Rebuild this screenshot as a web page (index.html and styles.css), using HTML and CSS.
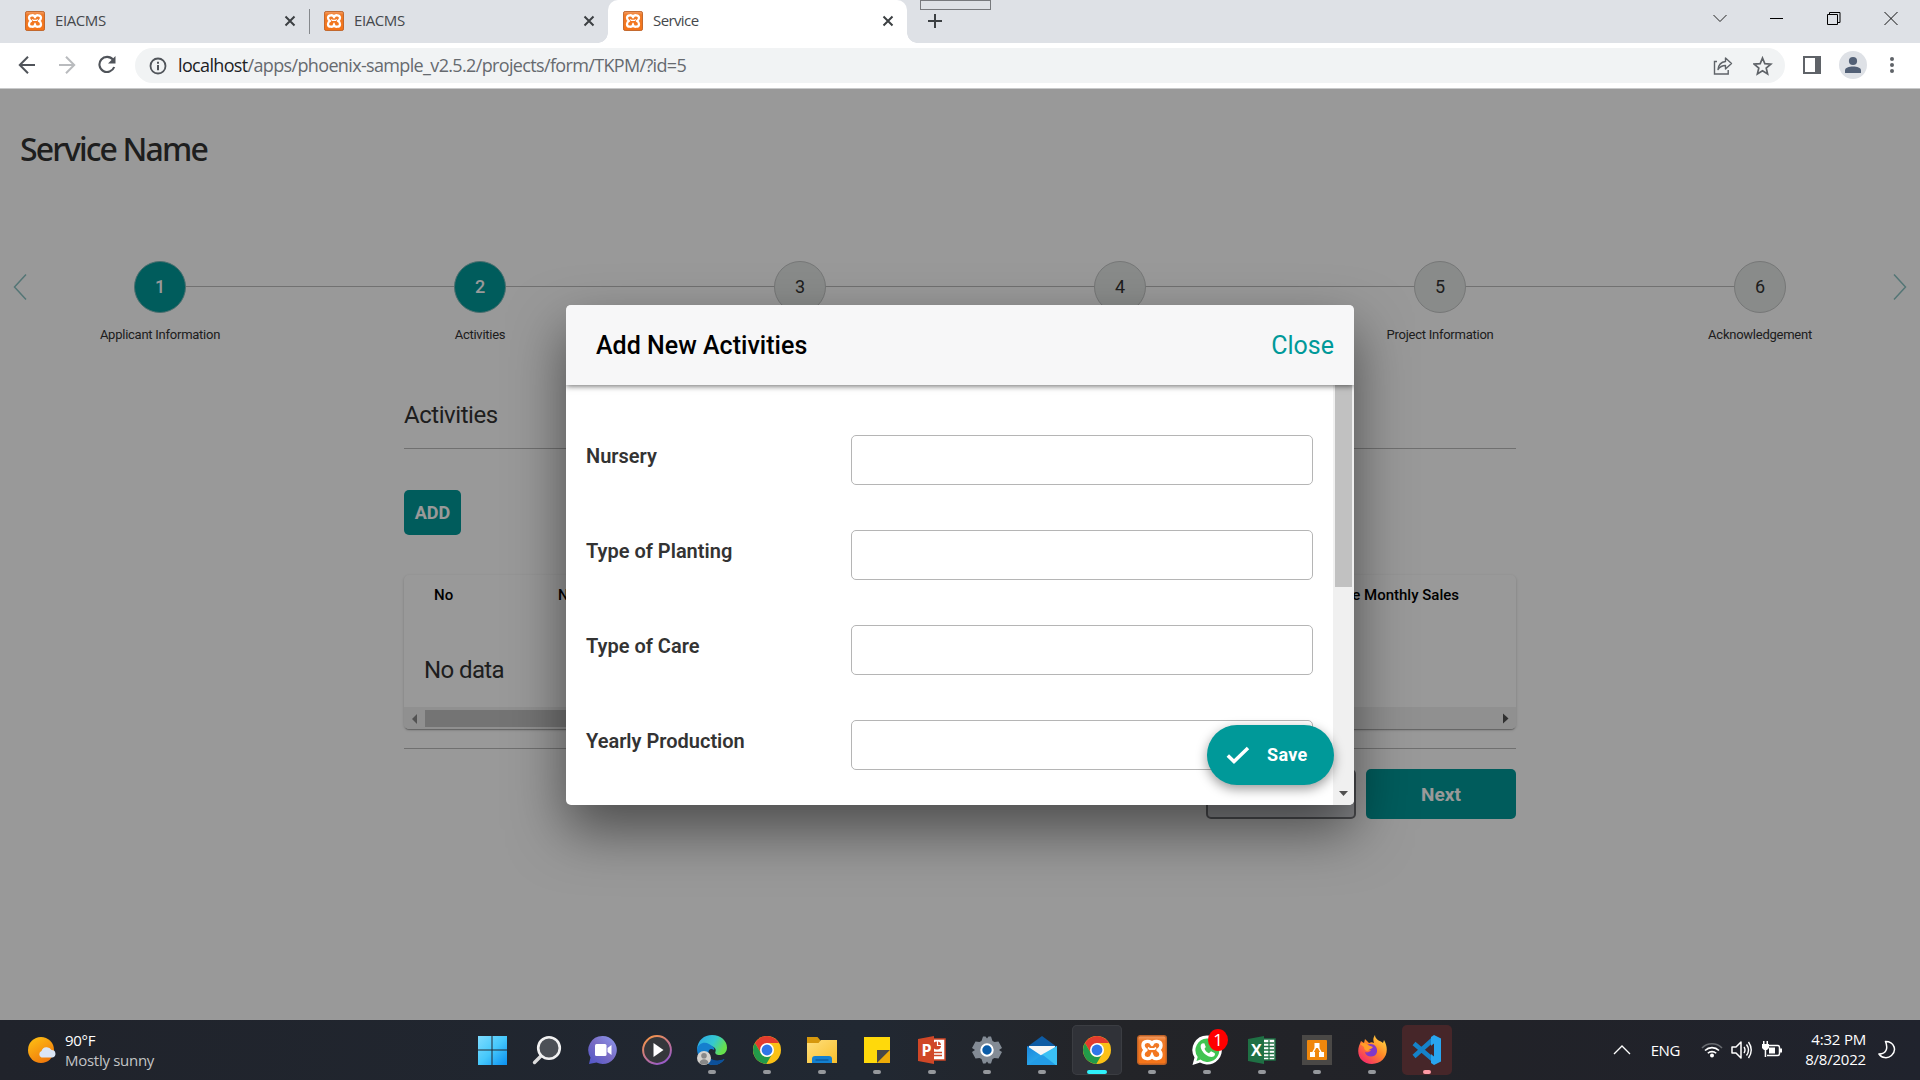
FILE: index.html
```html
<!DOCTYPE html>
<html lang="en">
<head>
<meta charset="utf-8">
<title>Service</title>
<link rel="stylesheet" href="styles.css">
</head>
<body>
<svg class="defs" width="0" height="0" aria-hidden="true">
  <defs>
    <linearGradient id="gWin" x1="0" y1="0" x2="1" y2="1"><stop offset="0" stop-color="#7fdcff"/><stop offset=".5" stop-color="#46c8fb"/><stop offset="1" stop-color="#0a8ff0"/></linearGradient>
    <linearGradient id="gChat" x1="1" y1="0" x2="0" y2="1"><stop offset="0" stop-color="#8c9af0"/><stop offset=".5" stop-color="#7a6cc4"/><stop offset="1" stop-color="#4f55c9"/></linearGradient>
    <linearGradient id="gMedia" x1="0" y1="0" x2=".6" y2="1"><stop offset="0" stop-color="#ff9a3d"/><stop offset="1" stop-color="#9a5cc4"/></linearGradient>
    <linearGradient id="gEdge" x1="0" y1="0" x2="1" y2=".4"><stop offset="0" stop-color="#2aa5e8"/><stop offset=".6" stop-color="#35c8d0"/><stop offset="1" stop-color="#66e04c"/></linearGradient>
    <linearGradient id="gFolder" x1="0" y1="0" x2="1" y2="1"><stop offset="0" stop-color="#ffdf7c"/><stop offset="1" stop-color="#f8bf2c"/></linearGradient>
    <linearGradient id="gSun" x1="0" y1="0" x2=".6" y2="1"><stop offset="0" stop-color="#ffc414"/><stop offset="1" stop-color="#f07a0c"/></linearGradient>
    <linearGradient id="gFox" x1="1" y1="0" x2=".2" y2="1"><stop offset="0" stop-color="#ffe94a"/><stop offset=".5" stop-color="#ff8a26"/><stop offset="1" stop-color="#f5256e"/></linearGradient>
    <linearGradient id="gMail" x1="0" y1="0" x2="1" y2="1"><stop offset="0" stop-color="#1a86dc"/><stop offset="1" stop-color="#38c0f4"/></linearGradient>
    <linearGradient id="gXampp" x1="0" y1="0" x2="0" y2="1"><stop offset="0" stop-color="#f3a06a"/><stop offset=".18" stop-color="#f07a28"/><stop offset="1" stop-color="#f57418"/></linearGradient>
    <symbol id="xampp" viewBox="0 0 30 30">
      <rect x=".7" y=".7" width="28.6" height="28.6" rx="2.5" fill="url(#gXampp)" stroke="#bd6126" stroke-width="1.4"/>
      <path d="M15 9.500C14 5 6 5.500 6 10.300c0 2.600 1.600 4 3 4.700-1.600.7-3 2.100-3 4.700 0 4.800 8 5.300 9 .8 1 4.500 9 4 9-.8 0-2.600-1.400-4-3-4.700 1.400-.7 3-2.100 3-4.700 0-4.800-8-5.300-9-.8z" fill="none" stroke="#fff" stroke-width="3.400" stroke-linejoin="round"/>
      <path d="M11 12.500l1.500 1.500h5l1.500-1.500M15 17.500v3" fill="none" stroke="#fff" stroke-width="1.800"/>
    </symbol>
    <symbol id="close" viewBox="0 0 12 12"><path d="M1.500 1.500l9 9m0-9l-9 9" stroke="#3c4043" stroke-width="2" fill="none"/></symbol>
    <symbol id="chrome" viewBox="0 0 30 30">
      <circle cx="15" cy="15" r="14" fill="#fbc116"/>
      <path d="M15 8h12.100A14 14 0 0 0 2.900 8l6 10z" fill="#e33b2e"/><path d="M2.900 8A14 14 0 0 0 14.300 29L20.600 18.200A6.500 6.500 0 0 1 9 18.200z" fill="#229a4a"/>
      <circle cx="15" cy="15" r="7" fill="#fff"/><circle cx="15" cy="15" r="5.400" fill="#2f76e8"/>
    </symbol>
  </defs>
</svg>

<header class="tabs">
  <div class="tab"><svg class="fav"><use href="#xampp"/></svg><span>EIACMS</span><svg class="x"><use href="#close"/></svg></div>
  <div class="tab sep"><svg class="fav"><use href="#xampp"/></svg><span>EIACMS</span><svg class="x"><use href="#close"/></svg></div>
  <div class="tab active"><svg class="fav"><use href="#xampp"/></svg><span>Service</span><svg class="x"><use href="#close"/></svg></div>
  <div class="newtab"><i class="ghost"></i><svg width="16" height="16"><path d="M8 1v14M1 8h14" stroke="#3c4043" stroke-width="2"/></svg></div>
  <div class="wincontrols">
    <svg width="14" height="14"><path d="M.5 4l6.500 6.500L13.500 4" stroke="#222" fill="none"/></svg>
    <svg width="14" height="14"><path d="M0 7.500h13" stroke="#000"/></svg>
    <svg width="14" height="14"><path d="M.5 3.500h10v10H.5zM2.500 3.500v-2h10.500v10h-2.500" stroke="#000" fill="none"/></svg>
    <svg width="14" height="14"><path d="M.5 1l13 13m0-13l-13 13" stroke="#111" fill="none"/></svg>
  </div>
</header>

<nav class="toolbar">
  <div class="navbtns">
    <svg width="18" height="20"><path d="M17 10H2.500M10 1.800L1.800 10l8.200 8.200" stroke="#50545a" stroke-width="2" fill="none"/></svg>
    <svg width="18" height="20"><path d="M1 10h14.500M8 1.800l8.200 8.200L8 18.200" stroke="#b9bbbe" stroke-width="2" fill="none"/></svg>
    <svg width="20" height="20"><path d="M15 4.700A7.600 7.600 0 1 0 16.200 12" stroke="#50545a" stroke-width="2.100" fill="none"/><path d="M17.500 1v7.500H10z" fill="#50545a"/></svg>
  </div>
  <div class="address">
    <svg width="18" height="18"><circle cx="9" cy="9" r="7.500" fill="none" stroke="#50545a" stroke-width="1.800"/><path d="M9 8v5.200M9 4.700v2" stroke="#50545a" stroke-width="2"/></svg>
    <span class="url"><b>localhost</b>/apps/phoenix-sample_v2.5.2/projects/form/TKPM/?id=5</span>
    <svg width="20" height="20"><path d="M4 5.500H1.500v12.500h13.700v-4" fill="none" stroke="#5f6368" stroke-width="1.400"/><path d="M12.500 2v3.500C8 6 5.500 9 5 13.500c2-3 4-4 7.500-4V13l6-5.500z" fill="none" stroke="#5f6368" stroke-width="1.400" stroke-linejoin="round"/></svg>
    <svg width="20" height="20"><path d="M9.500 2l2.300 5.600 6 .5-4.600 3.900 1.400 5.900L9.500 14.700l-5.100 3.200L5.800 12 1.200 8.100l6-.5z" fill="none" stroke="#5f6368" stroke-width="1.700"/></svg>
  </div>
  <div class="extras">
    <svg width="18" height="18"><rect x="1" y="1" width="16" height="16" fill="#fff" stroke="#5f6368" stroke-width="2"/><path d="M12 1h5v16h-5z" fill="#5f6368"/></svg>
    <svg width="28" height="28"><circle cx="14" cy="14" r="14" fill="#dee1e6"/><circle cx="14" cy="10" r="4.100" fill="#526076"/><path d="M6 22v-2.500c0-3 4-4 8-4s8 1 8 4V22z" fill="#526076"/></svg>
    <svg width="6" height="18"><g fill="#5f6368"><circle cx="3" cy="3" r="2"/><circle cx="3" cy="9" r="2"/><circle cx="3" cy="15" r="2"/></g></svg>
  </div>
</nav>

<main class="page">
  <h1>Service Name</h1>
  <section class="stepper">
    <svg class="arrow prev" width="14" height="26"><path d="M13 .5L1.500 13 13 25.500"/></svg>
    <ol class="steps">
      <li class="done"><b>1</b><span>Applicant Information</span></li>
      <li class="done"><b>2</b><span>Activities</span></li>
      <li><b>3</b></li>
      <li><b>4</b></li>
      <li><b>5</b><span>Project Information</span></li>
      <li><b>6</b><span>Acknowledgement</span></li>
    </ol>
    <svg class="arrow next" width="14" height="26"><path d="M1 .5L12.500 13 1 25.500"/></svg>
  </section>
  <section class="content">
    <h2>Activities</h2>
    <button class="btn add">ADD</button>
    <div class="table">
      <div class="thead"><span>No</span><span>Nursery</span><span class="last">Average Monthly Sales</span></div>
      <p>No data</p>
      <div class="hscroll"><svg width="20" height="21"><path d="M13 6v10L8 11z" fill="#8b8b8b"/></svg><i></i><svg width="20" height="21"><path d="M7 5.500v10l5.500-5z" fill="#505050"/></svg></div>
    </div>
    <div class="actions"><button class="btn back"></button><button class="btn">Next</button></div>
  </section>

  <div class="overlay">
    <div class="dialog">
      <div class="dhead"><h3>Add New Activities</h3><a>Close</a></div>
      <div class="dbody">
        <form class="fields">
          <label><span>Nursery</span><input></label>
          <label><span>Type of Planting</span><input></label>
          <label><span>Type of Care</span><input></label>
          <label><span>Yearly Production</span><input></label>
        </form>
        <div class="vscroll"><i></i><svg width="21" height="24"><path d="M6 10h9l-4.500 5z" fill="#505050"/></svg></div>
      </div>
      <button class="save" type="button"><svg width="26" height="20"><path d="M2.800 10.500l6.200 6L23 3" fill="none" stroke="#fff" stroke-width="3.500"/></svg>Save</button>
    </div>
  </div>
</main>

<footer class="taskbar">
  <div class="weather">
    <svg width="30" height="30"><circle cx="13" cy="15" r="13" fill="url(#gSun)"/><path d="M13.500 22.500a3.500 3.500 0 0 1 0-6.500 5.500 5.500 0 0 1 10-1 3.800 3.800 0 0 1 1 7.500z" fill="#dbe6f5"/></svg>
    <div><span>90°F</span><span class="dim">Mostly sunny</span></div>
  </div>
  <div class="apps">
    <div class="app"><svg viewBox="0 0 30 30"><path d="M1 1h13.500v13.500H1zM15.500 1H30v13.500H15.500zM1 15.500h13.500V30H1zM15.500 15.500H30V30H15.500z" fill="url(#gWin)"/></svg></div>
    <div class="app"><svg viewBox="0 0 30 30"><path d="M2.500 27.500L9 21" stroke="#ddd" stroke-width="3.400" stroke-linecap="round"/><circle cx="17" cy="13" r="10.800" fill="#4c5056" stroke="#f1f1f1" stroke-width="2.600"/></svg></div>
    <div class="app"><svg viewBox="0 0 30 30"><path d="M15.500 1a14 14 0 1 1-6 26.500L2 29l1.500-6.500A14 14 0 0 1 15.500 1z" fill="url(#gChat)"/><rect x="8" y="9" width="11.500" height="12" rx="1.500" fill="#fff"/><path d="M20.500 13l4-3v10l-4-3z" fill="#fff"/></svg></div>
    <div class="app"><svg viewBox="0 0 30 30"><circle cx="15" cy="15" r="13.900" fill="#35373b" stroke="url(#gMedia)" stroke-width="2"/><path d="M11.500 8l10 7-10 7z" fill="#fff"/></svg></div>
    <div class="app run"><svg viewBox="0 0 30 30"><path d="M0 14C1 5 7 0 15 0c9 0 15 6 15 12.500 0 5-3.500 7.500-7.500 7.500-3 0-5-1.500-4-3.500 1.500-4-4-6.500-8.500-4z" fill="url(#gEdge)"/><path d="M0 14c1-5 7-8 12-5 5 2.500 6 5 5 6-4-3-7 1-5 6 1.500 5 8 7 15.500 3-4 6-11 7-16 5C4 27 0 20 0 14z" fill="#157fce"/><path d="M12 19c-1 5 6 8.500 15.500 5-4 6-10 7-14.500 5.500-3-2.500-4-7-1-10.500z" fill="#0c509a"/><circle cx="7" cy="23" r="7" fill="#d4d1cd"/><circle cx="7" cy="20.800" r="2.800" fill="#888"/><path d="M2.500 28c.5-5 8.500-5 9 0-2.500 2-6.500 2-9 0z" fill="#888"/></svg></div>
    <div class="app run"><svg><use href="#chrome"/></svg></div>
    <div class="app run"><svg viewBox="0 0 30 30"><path d="M0 2h10.500l3 3.500v4H0z" fill="#d6980d"/><path d="M0 8h11.500l2.500-3h16v23H0z" fill="url(#gFolder)"/><path d="M5 28v-4c0-2 1-3 3-3h14c2 0 3 1 3 3v4z" fill="#1380d0"/><path d="M8.500 25h13" stroke="#084b88"/></svg></div>
    <div class="app run"><svg viewBox="0 0 30 30"><path d="M2 2h26v13L15 28H2z" fill="#ffd90b"/><path d="M15 28V15h13z" fill="#484747"/><path d="M15 28l13-13v13z" fill="#edab08"/></svg></div>
    <div class="app run"><svg viewBox="0 0 30 30"><path d="M15 4h13v21H15z" fill="#fff" stroke="#d04727" stroke-width="1.500"/><circle cx="20" cy="10.500" r="4" fill="#d04727"/><path d="M20.500 6v4.500H25" stroke="#fff" stroke-width="1.200" fill="none"/><path d="M17 17.500h8M17 20.500h8" stroke="#d04727" stroke-width="1.500" fill="none"/><path d="M1 4l16-3v28L1 26z" fill="#d04727"/><text x="4.500" y="20.500" font-size="16" class="glyph">P</text></svg></div>
    <div class="app run"><svg viewBox="0 0 30 30"><path d="M11 1.500h2.500L15 3.500l1.500-2H19l1.500 4.500 2 1 4-.5L30 13l-3 2 3 2-3.500 6.500-4-.5-2 1-1.500 4.500h-2.500l-1.500-2-1.500 2H11L9.500 24l-2-1-4 .5L0 17l3-2-3-2 3.500-6.500 4 .5 2-1z" fill="#838b95"/><circle cx="15" cy="15" r="5.700" fill="#0b5ca8" stroke="#fff" stroke-width="2"/></svg></div>
    <div class="app run"><svg viewBox="0 0 30 30"><path d="M0 12L15 1l15 11v5H0z" fill="#0d5ba4"/><path d="M2 11h26v11H2z" fill="#f5f5f5"/><path d="M0 11l15 10 15-10v20H0z" fill="url(#gMail)"/><path d="M15 19.500L30 11v20z" fill="#3ac0f4"/><path d="M0 31l15-11.500L30 31z" fill="#239ce6"/></svg></div>
    <div class="app run current"><svg><use href="#chrome"/></svg></div>
    <div class="app run"><svg><use href="#xampp"/></svg></div>
    <div class="app run"><svg viewBox="0 0 30 30"><path d="M15 .5a14.500 14.500 0 1 1-7 27L.5 30l2-7.500A14.500 14.500 0 0 1 15 .5z" fill="#fff"/><path d="M15 3.500a11.700 11.700 0 1 1-6.500 21L4.500 26l1.200-4A11.700 11.700 0 0 1 15 3.500z" fill="#41c452"/><path d="M10 8.500c-5 4 5.500 16 11.500 13 2-1.500 1.500-3 1-3.500l-3.500-1.700-2 2c-2-.6-4-2.800-4.500-4.500l1.300-1.800-1.500-3.800z" fill="#fff"/></svg><em>1</em></div>
    <div class="app run"><svg viewBox="0 0 30 30"><path d="M15 4h13v21H15z" fill="#fff" stroke="#1f7044" stroke-width="1.500"/><path d="M17 8h10M17 11.500h10M17 15h10M17 18.500h10M17 22h10M22 5v20" stroke="#1f7044" stroke-width="1.300"/><path d="M1 4l16-3v28L1 26z" fill="#1f7044"/><text x="4" y="20.500" font-size="16" class="glyph">X</text></svg></div>
    <div class="app run"><svg viewBox="0 0 30 30"><path d="M0 0h30v30H0z" fill="#4a4846"/><rect x="5" y="5" width="20" height="20" rx="1" fill="#f0870c"/><path d="M15 10l-5 9m5-9l5 9" stroke="#fff" stroke-width="1.500"/><path d="M12.500 8h5v5h-5zM8 17h5v5H8zM17 17h5v5h-5z" fill="#fff"/></svg></div>
    <div class="app run"><svg viewBox="0 0 30 30"><path d="M18 0c0 5 6 6 8 8l1-3c7 12 0 24-12 24C5 29-1 21 2 11l2-5 3 2 1-4 4 4c2-1 3-1 5 0-1-3-1-5 1-8z" fill="url(#gFox)"/><path d="M10 10c5-3 11 1 10 7s-11 6-12 0c2 1 5 0 6-2-3 0-5-2-4-5z" fill="#8138c8"/><path d="M3 9c3-2 6-1 8 1l5 2c-1 2-4 2-5 4-3 0-4-2-4-4z" fill="#ff9d28"/></svg></div>
    <div class="app run alert"><svg viewBox="0 0 30 30"><path d="M2 8.500l20 17M2 21.500l20-18" stroke="#1582c9" stroke-width="4.500"/><path d="M22 0l7 3.500v23L22 30l-3-2V2z" fill="#28a5ef"/><path d="M22 8.500v13L14 15z" fill="#462629"/></svg></div>
  </div>
  <div class="tray">
    <svg width="18" height="12"><path d="M1 10l8-8 8 8" stroke="#fff" stroke-width="1.300" fill="none"/></svg>
    <span class="lang">ENG</span>
    <svg class="wifi" width="22" height="18"><g fill="none" stroke-width="1.600" stroke="#fff"><path d="M1 7a14 14 0 0 1 20 0" stroke="#686b70"/><path d="M4 9.500a10 10 0 0 1 14 0M6.800 12.300a6 6 0 0 1 8.400 0"/></g><circle cx="11" cy="14.500" r="2" fill="#fff"/></svg>
    <svg width="22" height="20"><path d="M1 7h4l5-5v16l-5-5H1z" fill="none" stroke="#fff" stroke-width="1.500" stroke-linejoin="round"/><path d="M13 7q2 3 0 6M15.500 4.500q4 5.500 0 11M17.500 2q5.500 8 0 16" fill="none" stroke="#fff" stroke-width="1.400"/></svg>
    <svg width="22" height="18"><path d="M7 4.500h9.500q2 0 2 2v6q0 2-2 2H6" fill="none" stroke="#fff" stroke-width="1.500"/><path d="M8 6.500h6v6H8zM18.500 7.500H21v4h-2.500zM1 3h7v4L6 9H3L1 7zM2 0h1.500v3H2zM5.500 0H7v3H5.500zM3.700 8h1.500v8H3.700z" fill="#fff"/></svg>
    <div class="clock"><span>4:32 PM</span><span>8/8/2022</span></div>
    <svg width="18" height="20"><path d="M7.500 1.500c9 0 11.500 9 6 14-4 3.500-10 2.500-12.500-1.500 8 0 9-6.500 6.500-12.500z" fill="none" stroke="#fff" stroke-width="1.500" stroke-linejoin="round"/></svg>
  </div>
</footer>
</body>
</html>
```
FILE: styles.css
```css
* { box-sizing: border-box; }
body { margin: 0; height: 1080px; display: flex; flex-direction: column; overflow: hidden; font-family: Roboto, sans-serif; color: #333; background: #fff; }
svg { display: block; flex: none; }
.defs { position: absolute; }
h1, h2, h3, p, ol { margin: 0; padding: 0; font-weight: 400; }
button { font-family: inherit; }

.tabs { height: 43px; flex: none; display: flex; background: #dee1e6; font: 15px "Open Sans", sans-serif; color: #45484c; }
.tab { width: 299px; height: 43px; display: flex; align-items: center; padding: 0 13px 2px 15px; }
.tab:first-child { width: 309px; padding-left: 25px; }
.tab.sep { position: relative; }
.tab.sep::before { content: ""; position: absolute; left: 0; top: 9px; width: 1px; height: 25px; background: #85888c; }
.fav { width: 20px; height: 20px; margin-right: 10px; }
.tab span { flex: 1; letter-spacing: -.4px; padding-bottom: 2px; }
.tab.active span { letter-spacing: -.6px; }
.x { width: 12px; height: 12px; }
.tab.active { position: relative; background: #fff; border-radius: 10px 10px 0 0; }
.tab.active::before, .tab.active::after { content: ""; position: absolute; bottom: 0; width: 10px; height: 10px; }
.tab.active::before { left: -10px; background: radial-gradient(circle at 0 0, transparent 9.500px, #fff 10px); }
.tab.active::after { right: -10px; background: radial-gradient(circle at 100% 0, transparent 9.500px, #fff 10px); }
.newtab { position: relative; padding: 13px 0 0 20px; }
.ghost { position: absolute; left: 13px; top: 0; width: 71px; height: 10px; border: 1px solid #77797d; }
.wincontrols { margin-left: auto; padding: 11px 22px 0 0; display: flex; gap: 43px; }

.toolbar { height: 46px; flex: none; display: flex; padding-top: 5px; border-bottom: 1px solid #c8c9ca; }
.navbtns { width: 135px; display: flex; gap: 22px; padding: 7px 0 0 18px; }
.address { width: 1650px; height: 35px; border-radius: 18px; background: #f1f3f4; display: flex; align-items: center; padding: 0 12px 0 14px; }
.url { flex: 1; margin-left: 11px; padding-bottom: 2px; font: 18px "Open Sans", sans-serif; letter-spacing: -.65px; color: #666a6f; }
.url b { font-weight: 400; color: #202124; }
.address svg + svg { margin-left: 20px; }
.extras { display: flex; align-items: center; height: 34px; padding-left: 18px; gap: 18px; }
.extras svg:last-child { margin-left: 4px; }

.page { position: relative; flex: 1; background: #fff; }
.page h1 { padding: 37px 0 0 20px; font: 500 32px/46px "Noto Sans", sans-serif; letter-spacing: -1.85px; }
.stepper { display: flex; position: relative; margin-top: 89px; height: 110px; }
.arrow { position: absolute; top: 13px; fill: none; stroke: #8cc4c4; stroke-width: 1.500; }
.prev { left: 13px; }
.next { right: 13px; }
.steps { display: flex; width: 1920px; list-style: none; }
.steps li { position: relative; width: 320px; display: flex; flex-direction: column; align-items: center; font-size: 13px; letter-spacing: -.25px; }
.steps li + li::before { content: ""; position: absolute; top: 25px; right: 50%; width: 320px; height: 1px; background: #bdbdbd; }
.steps b { position: relative; z-index: 1; width: 52px; height: 52px; border-radius: 50%; border: 1px solid #c4c6c6; background: #e4e8e6; font: 18px/50px Roboto, sans-serif; text-align: center; }
.steps li.done b { background: #099; color: #fff; font-weight: 500; border-color: #7ab8b8; }
.steps span { margin-top: 14px; line-height: 16px; }
.content { width: 1112px; margin: 28px auto 0; }
.content h2 { height: 50px; border-bottom: 1px solid #bbb; font: 24px/32px Roboto, sans-serif; letter-spacing: -.45px; }
.btn { display: block; width: 150px; height: 50px; border: 0; border-radius: 5px; background: #099; color: #fff; font-weight: 700; font-size: 19px; }
.add { width: 57px; height: 45px; margin: 41px 0 40px; padding: 0; font-size: 18px; }
.table { height: 154px; border-radius: 5px; display: flex; flex-direction: column; overflow: hidden; box-shadow: 0 2px 1px -1px rgba(0,0,0,.25), 0 1px 3px rgba(0,0,0,.2); }
.thead { display: flex; padding: 11px 57px 0 30px; font: 500 15px/18px Roboto, sans-serif; color: #000; }
.thead span { width: 124px; }
.thead .last { margin-left: auto; width: auto; }
.table p { padding: 50px 20px 0; font-size: 24px; line-height: 32px; letter-spacing: -.6px; }
.hscroll { margin-top: auto; height: 22px; display: flex; align-items: center; background: #f0f0f0; }
.hscroll i { width: 700px; height: 17px; margin: 0 auto 0 1px; background: #c1c1c1; }
.actions { margin-top: 19px; padding-top: 20px; border-top: 1px solid #bbb; display: flex; justify-content: flex-end; gap: 10px; }
.back { background: #e2e3e8; border: 2px solid #7b7c80; color: #333; }

.overlay { position: absolute; inset: 0; z-index: 5; background: rgba(0,0,0,.4); display: flex; align-items: center; justify-content: center; padding-top: 1px; }
.dialog { position: relative; width: 788px; height: 500px; border-radius: 5px; overflow: hidden; background: #fff; display: flex; flex-direction: column; box-shadow: 0 25px 55px rgba(0,0,0,.5); }
.dhead { position: relative; z-index: 1; flex: none; height: 80px; padding: 0 20px 0 30px; display: flex; align-items: center; justify-content: space-between; background: #f7f7f8; box-shadow: 0 1px 6px rgba(0,0,0,.6); font-size: 25px; color: #000; }
.dhead h3 { font-size: 25px; font-weight: 500; letter-spacing: .02px; }
.dhead a { color: #099; }
.dbody { flex: 1; display: flex; min-height: 0; }
.fields { flex: 1; padding: 50px 20px 0; display: flex; flex-direction: column; gap: 45px; }
.fields label { display: flex; height: 50px; flex: none; }
.fields span { width: 265px; padding-top: 8px; font: 600 20px/27px Roboto, sans-serif; letter-spacing: 0; }
.fields input { width: 462px; height: 50px; border: 1px solid #b5b5b5; border-radius: 5px; background: #fff; }
.vscroll { width: 21px; background: #f0f0f0; display: flex; flex-direction: column; justify-content: space-between; }
.vscroll i { height: 202px; margin: 0 2px; background: #c1c1c1; }
.save { position: absolute; z-index: 2; right: 20px; bottom: 20px; width: 127px; height: 60px; border: 0; border-radius: 30px; background: #099; color: #fff; display: flex; align-items: center; gap: 16px; padding: 0 0 1px 18px; font-size: 18px; font-weight: 700; letter-spacing: .3px; box-shadow: 0 4px 12px rgba(0,0,0,.4); }

.taskbar { height: 60px; flex: none; display: flex; background: linear-gradient(90deg, #20232b, #212832 45%, #232428 58%, #212228 78%, #20232d); color: #fff; font: 15px/20px "Open Sans", sans-serif; }
.weather { width: 464.500px; display: flex; align-items: center; gap: 7px; padding-left: 28px; }
.weather div, .clock { display: flex; flex-direction: column; }
.weather span { letter-spacing: -.3px; }
.weather .dim { color: #c3c4c6; letter-spacing: -.28px; }
.apps { display: flex; }
.app { position: relative; width: 50px; height: 50px; margin: 5px 2.500px; display: flex; align-items: center; justify-content: center; border-radius: 5px; }
.app svg { width: 30px; height: 30px; }
.app.run::after { content: ""; position: absolute; bottom: 1px; left: 21px; width: 8px; height: 4px; border-radius: 2px; background: #95989c; }
.app.current { background: #303238; box-shadow: inset 0 0 0 1px #3b3d42; }
.app.current::after { left: 15px; width: 20px; background: #2ff0fa; }
.app.alert { background: #462629; }
.app.alert::after { background: #ff9aa5; }
.app em { position: absolute; left: 26px; top: 4px; width: 20px; height: 22px; border-radius: 50%; background: #f00; font: 17px/21px "Open Sans", sans-serif; text-align: center; }
.glyph { font-family: "Open Sans", sans-serif; font-weight: 700; fill: #fff; }
.tray { margin-left: auto; padding-right: 24px; display: flex; align-items: center; }
.lang { margin: 0 21px 0 20px; letter-spacing: -.4px; }
.tray svg + svg { margin-left: 8px; }
.clock { width: 83px; margin-right: 12px; padding-bottom: 2px; text-align: right; letter-spacing: -.2px; }
```
